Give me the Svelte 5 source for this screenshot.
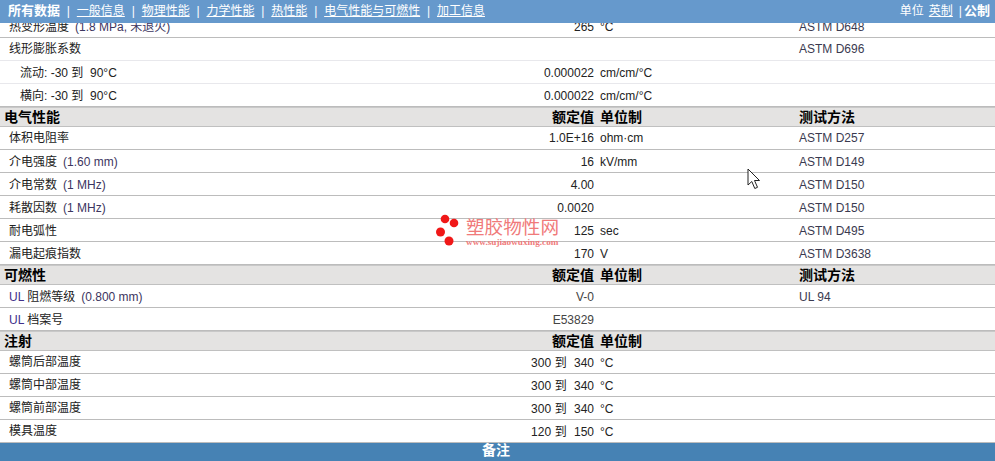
<script>
  const nav = ['一般信息','物理性能','力学性能','热性能','电气性能与可燃性','加工信息'];
  const sections = [
    { rows: [
      { l:'热变形温度', n:'(1.8 MPa, 未退火)', v:'265', u:'°C', t:'ASTM D648', strong:true },
      { l:'线形膨胀系数', v:'', u:'', t:'ASTM D696', soft:true, top:true },
      { l:'流动: -30 到  90°C', v:'0.000022', u:'cm/cm/°C', t:'', sub:true, soft:true },
      { l:'横向: -30 到  90°C', v:'0.000022', u:'cm/cm/°C', t:'', sub:true },
    ]},
    { title:'电气性能', method:'测试方法', rows: [
      { l:'体积电阻率', v:'1.0E+16', u:'ohm·cm', t:'ASTM D257', top:true },
      { l:'介电强度', n:'(1.60 mm)', v:'16', u:'kV/mm', t:'ASTM D149' },
      { l:'介电常数', n:'(1 MHz)', v:'4.00', u:'', t:'ASTM D150' },
      { l:'耗散因数', n:'(1 MHz)', v:'0.0020', u:'', t:'ASTM D150' },
      { l:'耐电弧性', v:'125', u:'sec', t:'ASTM D495' },
      { l:'漏电起痕指数', v:'170', u:'V', t:'ASTM D3638' },
    ]},
    { title:'可燃性', method:'测试方法', rows: [
      { pre:'UL', l:' 阻燃等级', n:'(0.800 mm)', v:'V-0', u:'', t:'UL 94', grey:true },
      { pre:'UL', l:' 档案号', v:'E53829', u:'', t:'', grey:true },
    ]},
    { title:'注射', method:'', rows: [
      { l:'螺筒后部温度', v:'300 到  340', u:'°C', t:'', lift:true },
      { l:'螺筒中部温度', v:'300 到  340', u:'°C', t:'', lift:true },
      { l:'螺筒前部温度', v:'300 到  340', u:'°C', t:'', lift:true },
      { l:'模具温度', v:'120 到  150', u:'°C', t:'', lift:true },
    ]},
  ];
</script>

<div class="page">
  <header class="bar">
    <nav class="links">
      <b>所有数据</b>
      {#each nav as item}
        <i class="sep">|</i><a href="#top">{item}</a>
      {/each}
    </nav>
    <div class="units">
      <span>单位</span><a href="#top">英制</a><i class="sep">|</i><b>公制</b>
    </div>
  </header>

  <main class="sheet">
    {#each sections as s}
      {#if s.title}
        <div class="head">
          <span class="h-title">{s.title}</span>
          <span class="h-val">额定值</span>
          <span class="h-unit">单位制</span>
          <span class="h-test">{s.method}</span>
        </div>
      {/if}
      {#each s.rows as r}
        <div class="row" class:soft={r.soft} class:sub={r.sub} class:top={r.top} class:grey={r.grey} class:lift={r.lift}>
          <span class="label">{#if r.pre}<u>{r.pre}</u>{/if}{r.l}{#if r.n}<em>{r.n}</em>{/if}</span>
          <span class="val">{r.v}</span>
          <span class="unit">{r.u}</span>
          <span class="test">{r.t}</span>
        </div>
      {/each}
    {/each}
    <div class="foot">备注</div>
  </main>

  <div class="mark">
    <svg width="24" height="32" viewBox="0 0 24 32"><circle cx="9" cy="5" r="4.300"/><circle cx="18" cy="9" r="4.300"/><circle cx="4.500" cy="18" r="4.500"/><circle cx="13" cy="27" r="4.500"/></svg>
    <div class="mark-text"><strong>塑胶物性网</strong><small>www.sujiaowuxing.com</small></div>
  </div>

  <svg class="cursor" width="14" height="23" viewBox="0 0 14 23"><path d="M1 1V17L4.800 13.500L7.800 20.500L10.500 19.300L7.500 12.500H12.500Z" fill="#fff" stroke="#222" stroke-width="1"/></svg>
</div>

<style>
  :global(body) { margin: 0; background: #fff; }
  .page {
    position: relative;
    width: 995px;
    height: 461px;
    overflow: hidden;
    font: 12px/1 "Liberation Sans", "Noto Sans CJK SC", sans-serif;
    color: #222;
  }
  .bar {
    position: absolute;
    inset: 0 0 auto 0;
    z-index: 2;
    height: 23px;
    background: #6699cc;
    color: #fff;
    display: flex;
    justify-content: space-between;
    align-items: center;
    padding: 0 5px 2px 8px;
    box-sizing: border-box;
  }
  .links, .units { display: flex; align-items: center; }
  .bar a { color: #fff; text-decoration: underline; }
  .bar b { font-weight: 700; font-size: 13px; }
  .sep { font-style: normal; margin: 0 6.850px; }
  .units span { margin-right: 5px; }
  .units .sep { margin: 0 2px 0 6px; }

  .sheet { padding-top: 15px; }
  .row, .head {
    display: grid;
    grid-template-columns: 474px 120px 199px 1fr;
    box-sizing: border-box;
    align-items: center;
  }
  .row {
    height: 23px;
    padding-top: 1px;
    border-bottom: 1px solid #bcbcbc;
  }
  .row.soft { border-bottom-color: #e8e8ec; }
  .row.top { padding-top: 0; padding-bottom: 1px; }
  .row.sub { padding-top: 2px; }
  .label { padding-left: 9px; white-space: pre; }
  .sub .label { padding-left: 20px; }
  .lift .label { margin-bottom: 2px; }
  .label em { font-style: normal; margin-left: 6px; color: #3c3560; }
  .label u { text-decoration: none; color: #40308a; }
  .val { text-align: right; white-space: pre; word-spacing: 0.300px; }
  .grey .val { color: #444; }
  .unit { padding-left: 6px; white-space: nowrap; }
  .test { white-space: nowrap; padding-left: 6px; color: #3a3a50; }
  .head {
    height: 20px;
    background: #e4e3e2;
    border-top: 1px solid #c8c8c8;
    border-bottom: 1px solid #c0c0c0;
    font-weight: 700;
    font-size: 14px;
    color: #000;
    padding-bottom: 1px;
  }
  .head .h-title { padding-left: 4px; }
  .h-val { text-align: right; white-space: nowrap; }
  .h-unit { padding-left: 6px; white-space: nowrap; }
  .h-test { padding-left: 6px; white-space: nowrap; }
  .foot {
    height: 18px;
    background: #4682b4;
    color: #fff;
    font-size: 14px;
    font-weight: 700;
    line-height: 15px;
    text-align: center;
    padding-right: 3px;
  }
  .mark {
    position: absolute;
    left: 436px;
    top: 214px;
    display: flex;
    gap: 6px;
    align-items: flex-start;
    pointer-events: none;
  }
  .mark circle { fill: #f01818; }
  .mark-text { display: flex; flex-direction: column; margin-top: 4px; color: #f07a7a; }
  .mark-text strong { font-weight: 400; font-size: 18.600px; line-height: 19px; }
  .mark-text small { font: 700 9.200px/9px "Liberation Serif", serif; white-space: nowrap; margin-top: 1px; }
  .cursor { position: absolute; left: 747px; top: 168px; }
</style>
